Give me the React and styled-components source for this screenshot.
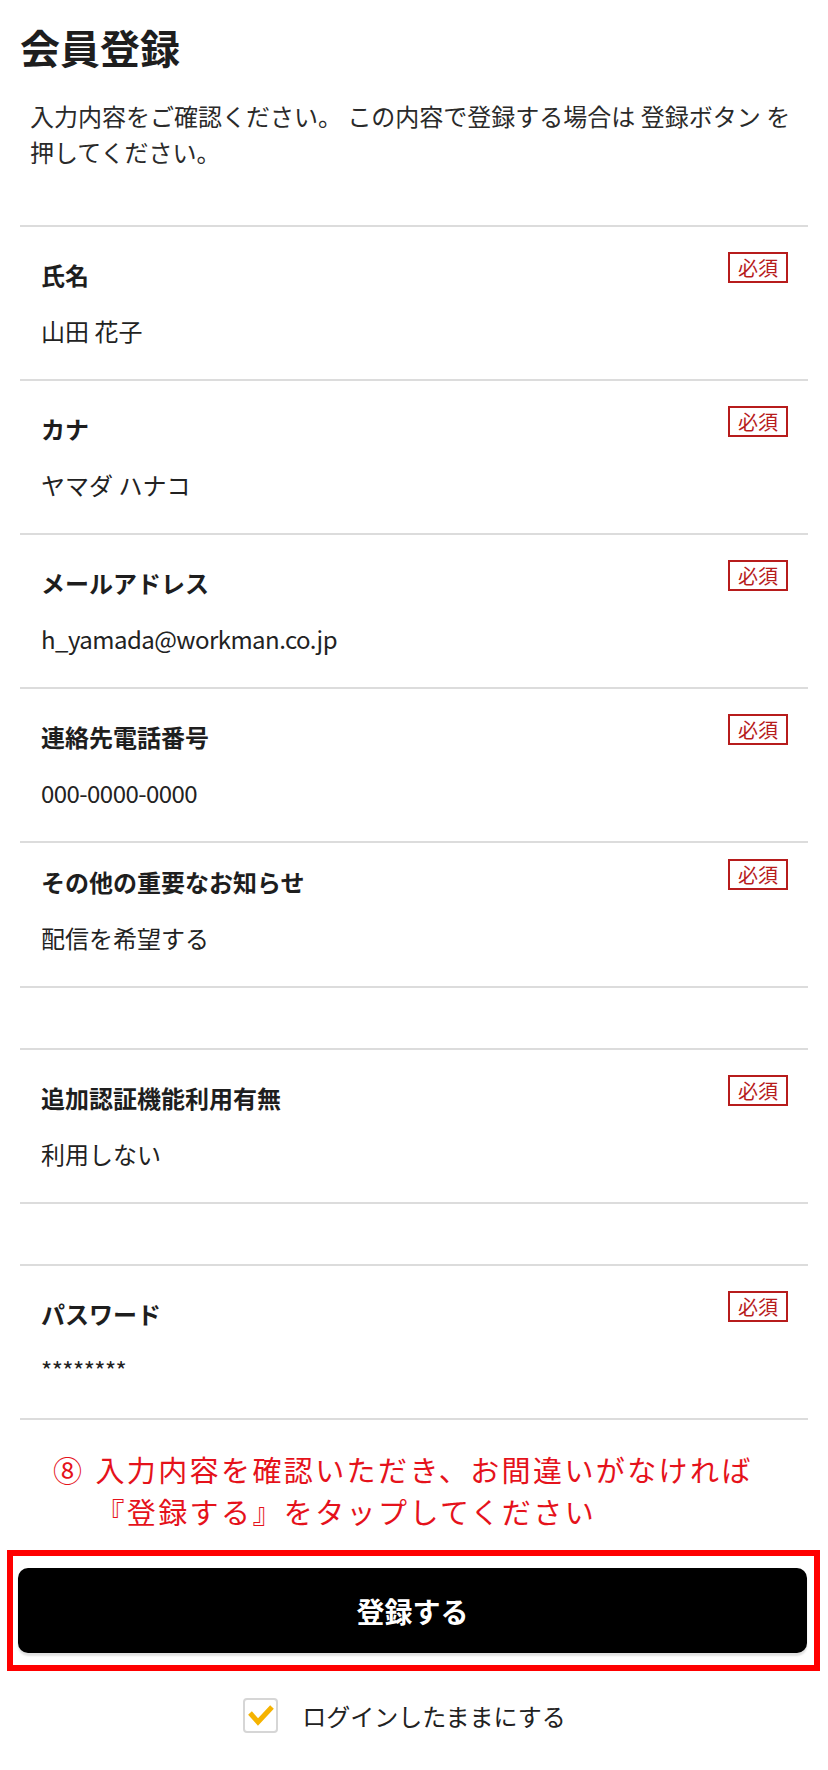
import React from "react";
import styled, { createGlobalStyle } from "styled-components";

const GlobalStyle = createGlobalStyle`
  html, body {
    margin: 0;
    padding: 0;
    background: #ffffff;
  }
  body {
    font-family: "Noto Sans CJK JP", "Noto Sans", sans-serif;
    color: #222222;
  }
  *, *::before, *::after {
    box-sizing: border-box;
  }
`;

const Page = styled.main`
  width: 828px;
  padding: 23px 20px 37px;
  background: #ffffff;
`;

const Title = styled.h1`
  margin: 0;
  font-size: 40px;
  line-height: 48px;
  font-weight: 700;
  color: #1e1e1e;
`;

const Lead = styled.p`
  margin: 27px 0 0;
  padding-left: 10px;
  font-size: 24px;
  line-height: 36px;
  font-weight: 400;
  color: #2a2a2a;
`;

const FieldList = styled.div`
  margin-top: 55px;
  border-bottom: 2px solid #dcdcdc;
`;

const Field = styled.section`
  border-top: 2px solid #dcdcdc;
  padding: ${(p) => (p.$compact ? 16 : 25)}px 20px 30px 21px;
`;

const FieldHeader = styled.div`
  display: flex;
  justify-content: space-between;
  align-items: flex-start;
`;

const Label = styled.h2`
  margin: 5px 0 0;
  font-size: 24px;
  line-height: 36px;
  font-weight: 700;
  color: #1e1e1e;
`;

const Badge = styled.span`
  flex: none;
  width: 60px;
  height: 31px;
  border: 2px solid #b71c1c;
  color: #b71c1c;
  font-size: 20px;
  line-height: 27px;
  text-align: center;
`;

const Value = styled.p`
  margin: 20px 0 0;
  font-size: 24px;
  line-height: 36px;
  font-weight: 400;
  color: #222222;
  letter-spacing: ${(p) => (p.$latin ? "-0.55px" : "0")};
`;

const Spacer = styled.div`
  border-top: 2px solid #dcdcdc;
  height: 62px;
`;

const Note = styled.div`
  margin-top: 28px;
  padding-left: 33px;
  display: flex;
  align-items: flex-start;
  color: #e5121b;
  font-size: 29px;
  letter-spacing: 2.4px;
  line-height: 42px;
`;

const NoteMarker = styled.span`
  flex: none;
  margin-right: 11px;
`;

const NoteText = styled.p`
  margin: 0;
`;

const Highlight = styled.div`
  margin: 18px -12px 0 -13px;
  border: 6px solid #ff0000;
  padding: 12px 7px 12px 5px;
`;

const SubmitButton = styled.button`
  display: block;
  width: 100%;
  height: 85px;
  border: none;
  border-radius: 10px;
  background: #000000;
  box-shadow: 0 3px 2px rgba(0, 0, 0, 0.12);
  color: #ffffff;
  font-family: "Noto Sans CJK JP", "Noto Sans", sans-serif;
  font-size: 28px;
  font-weight: 700;
  cursor: pointer;
`;

const KeepLogin = styled.label`
  margin-top: 27px;
  padding-right: 19px;
  display: flex;
  justify-content: center;
  align-items: center;
  gap: 24px;
  cursor: pointer;
`;

const CheckBox = styled.span`
  flex: none;
  width: 35px;
  height: 35px;
  border: 2px solid #d6d6d6;
  border-radius: 4px;
  background: #ffffff;
  display: flex;
  align-items: center;
  justify-content: center;
`;

const KeepText = styled.span`
  font-size: 24px;
  line-height: 35px;
  color: #222222;
`;

const fields = [
  { label: "氏名", value: "山田 花子" },
  { label: "カナ", value: "ヤマダ ハナコ" },
  { label: "メールアドレス", value: "h_yamada@workman.co.jp", latin: true },
  { label: "連絡先電話番号", value: "000-0000-0000", latin: true },
  { label: "その他の重要なお知らせ", value: "配信を希望する", compact: true, spacer: true },
  { label: "追加認証機能利用有無", value: "利用しない", spacer: true },
  { label: "パスワード", value: "********", latin: true },
];

export default function App() {
  return (
    <>
      <GlobalStyle />
      <Page>
        <Title>会員登録</Title>
        <Lead>
          入力内容をご確認ください。 この内容で登録する場合は 登録ボタン を押してください。
        </Lead>
        <FieldList>
          {fields.map((f) => (
            <React.Fragment key={f.label}>
              <Field $compact={f.compact}>
                <FieldHeader>
                  <Label>{f.label}</Label>
                  <Badge>必須</Badge>
                </FieldHeader>
                <Value $latin={f.latin}>{f.value}</Value>
              </Field>
              {f.spacer && <Spacer />}
            </React.Fragment>
          ))}
        </FieldList>
        <Note>
          <NoteMarker>⑧</NoteMarker>
          <NoteText>
            入力内容を確認いただき、お間違いがなければ
            <br />
            『登録する』をタップしてください
          </NoteText>
        </Note>
        <Highlight>
          <SubmitButton type="button">登録する</SubmitButton>
        </Highlight>
        <KeepLogin>
          <CheckBox>
            <svg width="31" height="31" viewBox="0 0 31 31" aria-hidden="true">
              <polyline
                points="5,13 13,22 27,7"
                fill="none"
                stroke="#f5b301"
                strokeWidth="5"
                strokeLinejoin="miter"
              />
            </svg>
          </CheckBox>
          <KeepText>ログインしたままにする</KeepText>
        </KeepLogin>
      </Page>
    </>
  );
}
